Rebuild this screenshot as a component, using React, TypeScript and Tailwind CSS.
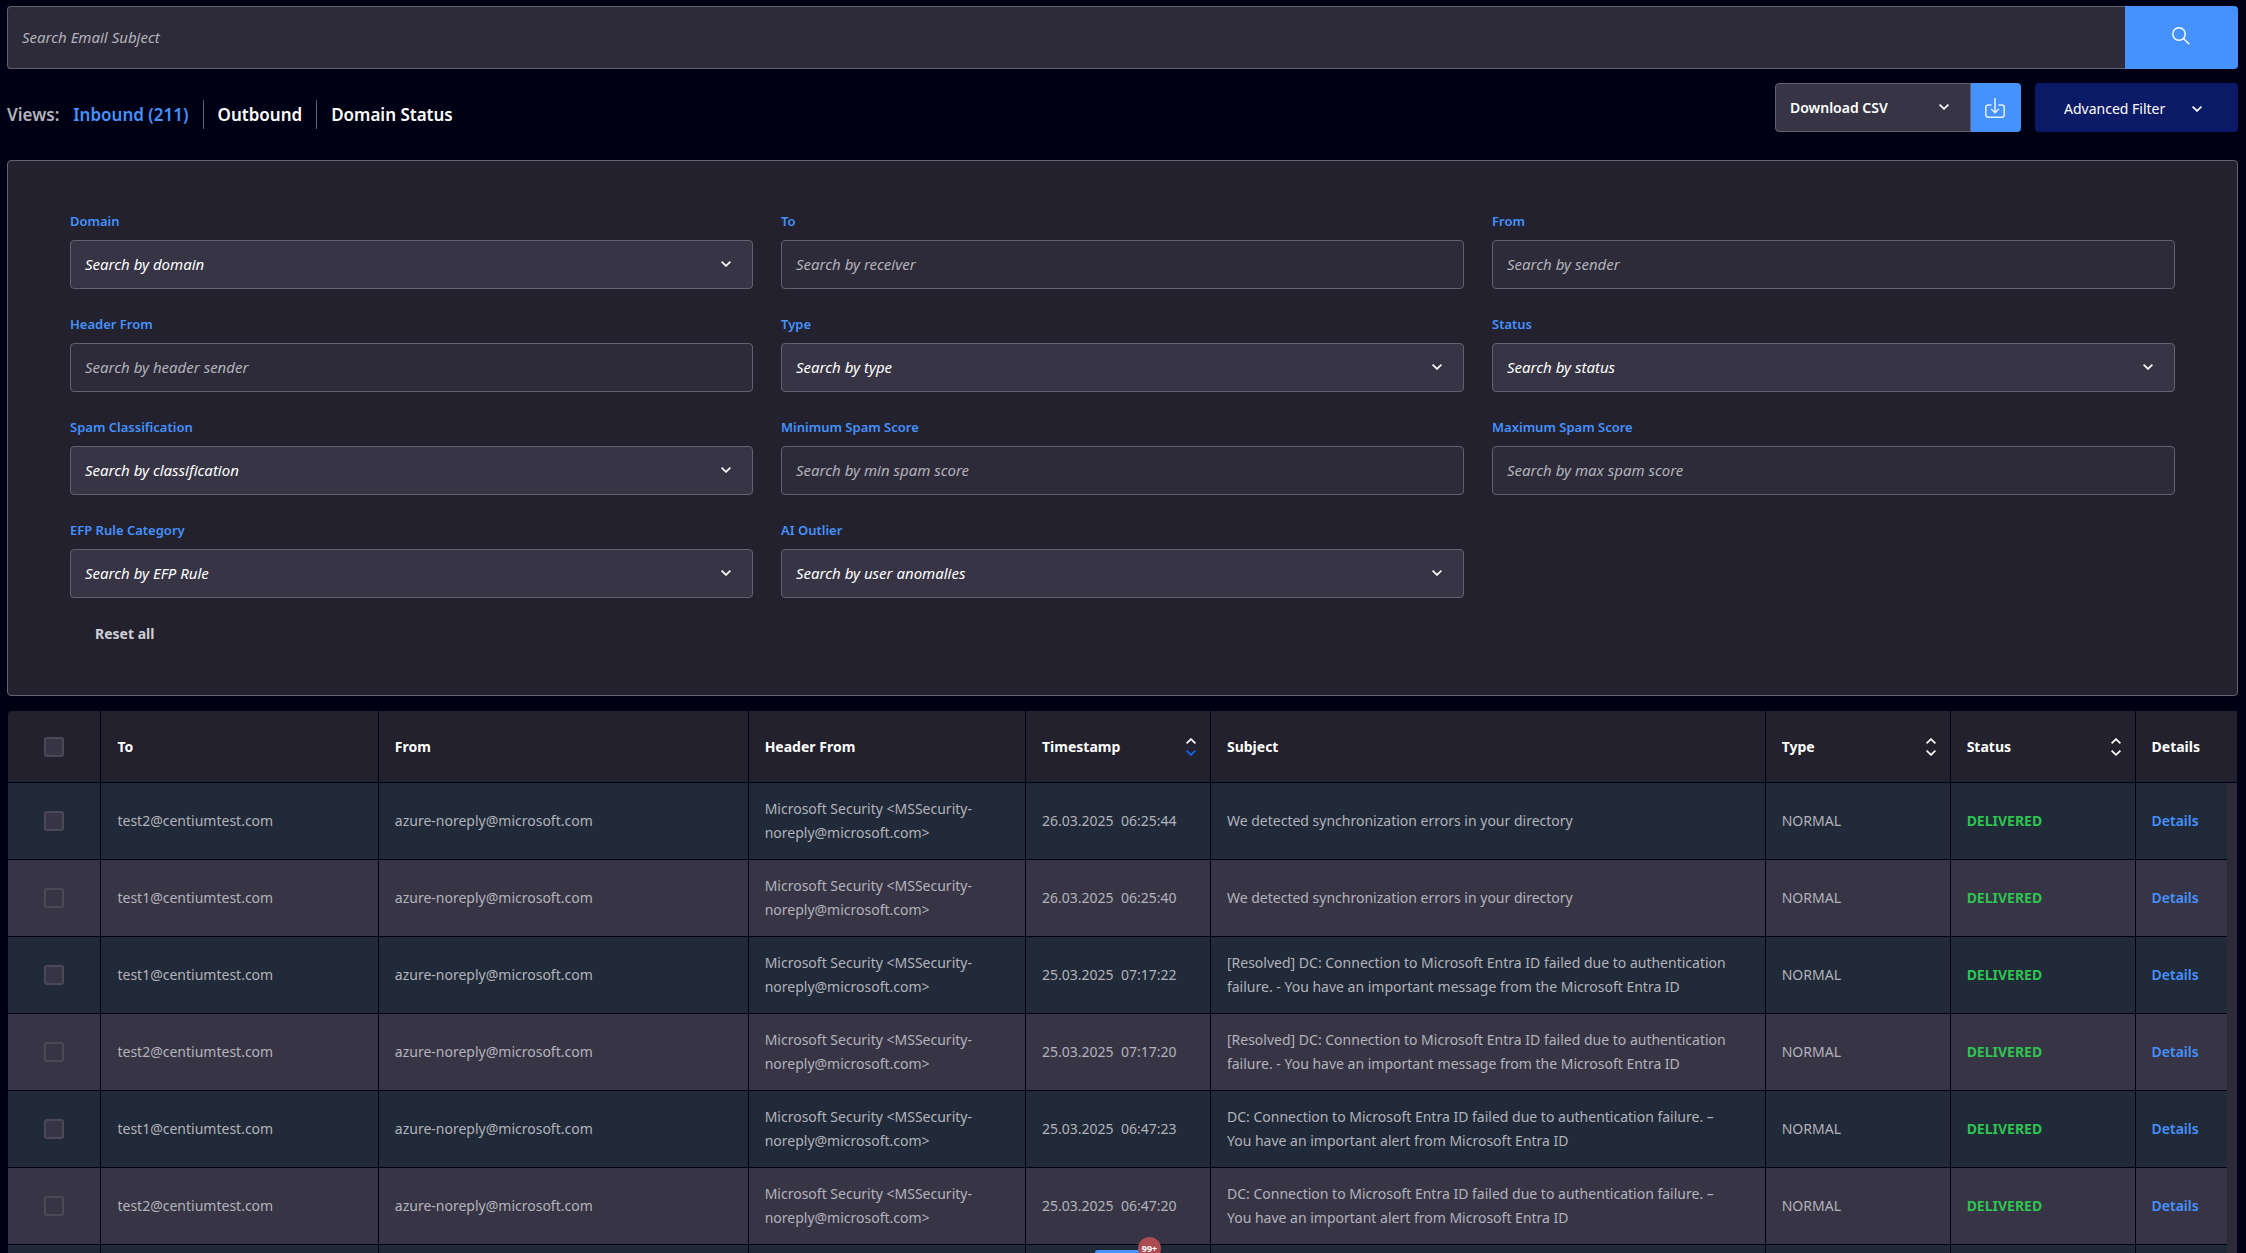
import React, { useId } from "react";

type Field = { label: string; hint: string; kind: "select" | "input" };

const fields: Field[] = [
  { label: "Domain", hint: "Search by domain", kind: "select" },
  { label: "To", hint: "Search by receiver", kind: "input" },
  { label: "From", hint: "Search by sender", kind: "input" },
  { label: "Header From", hint: "Search by header sender", kind: "input" },
  { label: "Type", hint: "Search by type", kind: "select" },
  { label: "Status", hint: "Search by status", kind: "select" },
  { label: "Spam Classification", hint: "Search by classification", kind: "select" },
  { label: "Minimum Spam Score", hint: "Search by min spam score", kind: "input" },
  { label: "Maximum Spam Score", hint: "Search by max spam score", kind: "input" },
  { label: "EFP Rule Category", hint: "Search by EFP Rule", kind: "select" },
  { label: "AI Outlier", hint: "Search by user anomalies", kind: "select" },
];

const DETECTED = "We detected synchronization errors in your directory";
const RESOLVED =
  "[Resolved] DC: Connection to Microsoft Entra ID failed due to authentication failure. - You have an important message from the Microsoft Entra ID";
const FAILED =
  "DC: Connection to Microsoft Entra ID failed due to authentication failure. – You have an important alert from Microsoft Entra ID";

const mails = [
  { to: "test2@centiumtest.com", date: "26.03.2025", time: "06:25:44", subject: DETECTED },
  { to: "test1@centiumtest.com", date: "26.03.2025", time: "06:25:40", subject: DETECTED },
  { to: "test1@centiumtest.com", date: "25.03.2025", time: "07:17:22", subject: RESOLVED },
  { to: "test2@centiumtest.com", date: "25.03.2025", time: "07:17:20", subject: RESOLVED },
  { to: "test1@centiumtest.com", date: "25.03.2025", time: "06:47:23", subject: FAILED },
  { to: "test2@centiumtest.com", date: "25.03.2025", time: "06:47:20", subject: FAILED },
];

const columns: { name: string; sort?: "none" | "desc" }[] = [
  { name: "To" },
  { name: "From" },
  { name: "Header From" },
  { name: "Timestamp", sort: "desc" },
  { name: "Subject" },
  { name: "Type", sort: "none" },
  { name: "Status", sort: "none" },
  { name: "Details" },
];

const rowGrid =
  "grid grid-cols-[1fr_3fr_4fr_3fr_2fr_6fr_2fr_2fr_1fr] border-b border-[#000014]";
const cellBase = "flex min-w-0 items-center border-l border-[#000014] pl-4 text-left";
const cell = `${cellBase} pr-3`;

function Chevron({ className = "", up = false }: { className?: string; up?: boolean }) {
  return (
    <svg
      aria-hidden="true"
      viewBox="0 0 10 6"
      className={`h-[6px] w-[10px] fill-none stroke-current ${className}`}
      strokeWidth="1.7"
    >
      <path d={up ? "M0.6 5.3 5 1.1l4.4 4.2" : "M0.6 0.7 5 4.9l4.4-4.2"} />
    </svg>
  );
}

function Check({ label }: { label: string }) {
  return (
    <input
      type="checkbox"
      aria-label={label}
      className="size-5 appearance-none rounded-[3px] border-2 border-[#4b4957] bg-[#373545]"
    />
  );
}

function FilterField({ label, hint, kind }: Field) {
  const id = useId();
  return (
    <div className="flex flex-col gap-2">
      <label htmlFor={id} className="text-[13px] leading-[21px] font-semibold text-[#4592ff]">
        {label}
      </label>
      {kind === "select" ? (
        <div className="relative">
          <select
            id={id}
            className="h-[49px] w-full appearance-none rounded border border-[#63616f] bg-[#373545] px-[14px] pb-px text-[15px] text-white italic"
          >
            <option>{hint}</option>
          </select>
          <Chevron className="pointer-events-none absolute top-[21px] right-[22px] text-white" />
        </div>
      ) : (
        <input
          id={id}
          type="text"
          placeholder={hint}
          className="h-[49px] w-full rounded border border-[#63616f] bg-[#2d2b39] px-[14px] pb-px text-[15px] italic placeholder:text-[#b3b2bb]"
        />
      )}
    </div>
  );
}

export default function App() {
  return (
    <main className="relative flex h-screen flex-col overflow-hidden bg-[#000014] pt-[6px] pr-2 pl-[7px] font-['Noto_Sans','Open_Sans',sans-serif] text-[14px] text-[#b3b2bb]">
      <form className="flex h-[63px] shrink-0">
        <input
          type="search"
          aria-label="Search Email Subject"
          placeholder="Search Email Subject"
          className="min-w-0 flex-1 rounded-l border border-r-0 border-[#63616f] bg-[#2d2b39] px-[14px] text-[15px] italic placeholder:text-[#b3b2bb]"
        />
        <button
          type="button"
          aria-label="Search"
          className="flex w-[113px] justify-center rounded-r bg-[#4592ff] pt-[21px] pr-[2px] text-white"
        >
          <svg aria-hidden="true" viewBox="0 0 18 18" className="size-[18px] fill-none stroke-current" strokeWidth="1.4">
            <circle cx="7" cy="7" r="6.2" />
            <path d="m11.5 11.5 5.8 5.8" />
          </svg>
        </button>
      </form>

      <div className="mt-[14px] flex shrink-0 justify-between">
        <nav aria-label="Views" className="mt-[17px] flex h-[29px] items-center text-[17px] font-semibold text-white">
          <span className="mr-[14px] text-[#b3b2bb]">Views:</span>
          <a href="#inbound" className="pr-[14px] text-[#4592ff]">Inbound (211)</a>
          <a href="#outbound" className="border-l border-[#63616f] px-[14px] leading-[29px]">Outbound</a>
          <a href="#domain-status" className="border-l border-[#63616f] pl-[14px] leading-[29px]">Domain Status</a>
        </nav>
        <div className="flex h-[49px]">
          <div className="relative">
            <select
              aria-label="Download format"
              className="h-full w-[196px] appearance-none rounded-l border border-[#63616f] bg-[#373545] px-[14px] pb-px text-[14px] font-semibold text-white"
            >
              <option>Download CSV</option>
            </select>
            <Chevron className="pointer-events-none absolute top-[21px] right-[22px] text-white" />
          </div>
          <button
            type="button"
            aria-label="Download"
            className="flex w-[50px] items-center justify-center rounded-r bg-[#4592ff] pr-[2px] text-[#e3eeff]"
          >
            <svg aria-hidden="true" viewBox="0 0 20 20" className="size-5 fill-none stroke-current" strokeWidth="1.5">
              <path d="M6.5 7H3.2A2.4 2.4 0 0 0 .8 9.4v7.4a2.4 2.4 0 0 0 2.4 2.4h13.6a2.4 2.4 0 0 0 2.4-2.4V9.4A2.4 2.4 0 0 0 16.8 7H13.5M10 0v14.5M6.2 11l3.8 3.8 3.8-3.8" />
            </svg>
          </button>
          <button
            type="button"
            className="ml-[14px] flex w-[203px] items-center justify-between rounded bg-[#0b1a66] pt-[2px] pr-9 pl-[29px] text-[14px] text-white"
          >
            Advanced Filter
            <Chevron />
          </button>
        </div>
      </div>

      <section
        aria-label="Advanced filter"
        className="mt-7 shrink-0 rounded border border-[#63616f] bg-[#22212d] px-[62px] pt-[50px] pb-[38px]"
      >
        <div className="grid grid-cols-3 gap-x-7 gap-y-[25px]">
          {fields.map((f) => (
            <FilterField key={f.label} {...f} />
          ))}
        </div>
        <button type="button" className="mt-3 h-[47px] px-[25px] text-[14px] font-bold text-[#cfced6]">
          Reset all
        </button>
      </section>

      <div className="mx-px mt-[15px] min-h-0 flex-1 overflow-hidden rounded-tl">
        <table className="block w-full text-[14px] leading-6">
          <thead className="block bg-[#22212d] pr-[10px]">
            <tr className={`${rowGrid} mr-[-10px] h-[72px] pr-[10px] text-white`}>
              <th className="flex items-center justify-center">
                <Check label="Select all" />
              </th>
              {columns.map((c) => (
                <th key={c.name} className={`${cell} justify-between font-bold`}>
                  {c.name}
                  {c.sort && (
                    <button type="button" aria-label={`Sort by ${c.name}`} className="mr-[2px] flex flex-col gap-[6px]">
                      <Chevron up />
                      <Chevron className={c.sort === "desc" ? "text-[#0a6cf5]" : ""} />
                    </button>
                  )}
                </th>
              ))}
            </tr>
          </thead>
          <tbody className="block bg-[#2d2b39] pr-[10px]">
            {mails.map((m) => (
              <tr key={m.time} className={`${rowGrid} h-[77px] odd:bg-[#202a38] even:bg-[#373545]`}>
                <td className="flex items-center justify-center">
                  <Check label={`Select message ${m.time}`} />
                </td>
                <td className={cell}>{m.to}</td>
                <td className={cell}>azure-noreply@microsoft.com</td>
                <td className={cell}>Microsoft Security &lt;MSSecurity-noreply@microsoft.com&gt;</td>
                <td className={`${cell} whitespace-pre`}>{`${m.date}  ${m.time}`}</td>
                <td className={`${cellBase} pr-8`}>{m.subject}</td>
                <td className={cell}>NORMAL</td>
                <td className={`${cell} font-bold text-[#2fc350]`}>DELIVERED</td>
                <td className={cell}>
                  <a href="#details" className="font-semibold text-[#4592ff]">Details</a>
                </td>
              </tr>
            ))}
            <tr className={`${rowGrid} h-[77px] bg-[#202a38]`}>
              <td />
              {columns.map((c) => (
                <td key={c.name} className={cell} />
              ))}
            </tr>
          </tbody>
        </table>
      </div>

      <button
        type="button"
        aria-label="Notifications"
        className="absolute bottom-0 left-1/2 h-[3px] w-14 -translate-x-1/2 rounded-t bg-[#4592ff]"
      >
        <span className="absolute -top-[13px] -right-[10px] flex size-[23px] justify-center rounded-full bg-[#ab4b52] pt-[7px] text-[9px] leading-[9px] font-bold text-white">
          99+
        </span>
      </button>
    </main>
  );
}
